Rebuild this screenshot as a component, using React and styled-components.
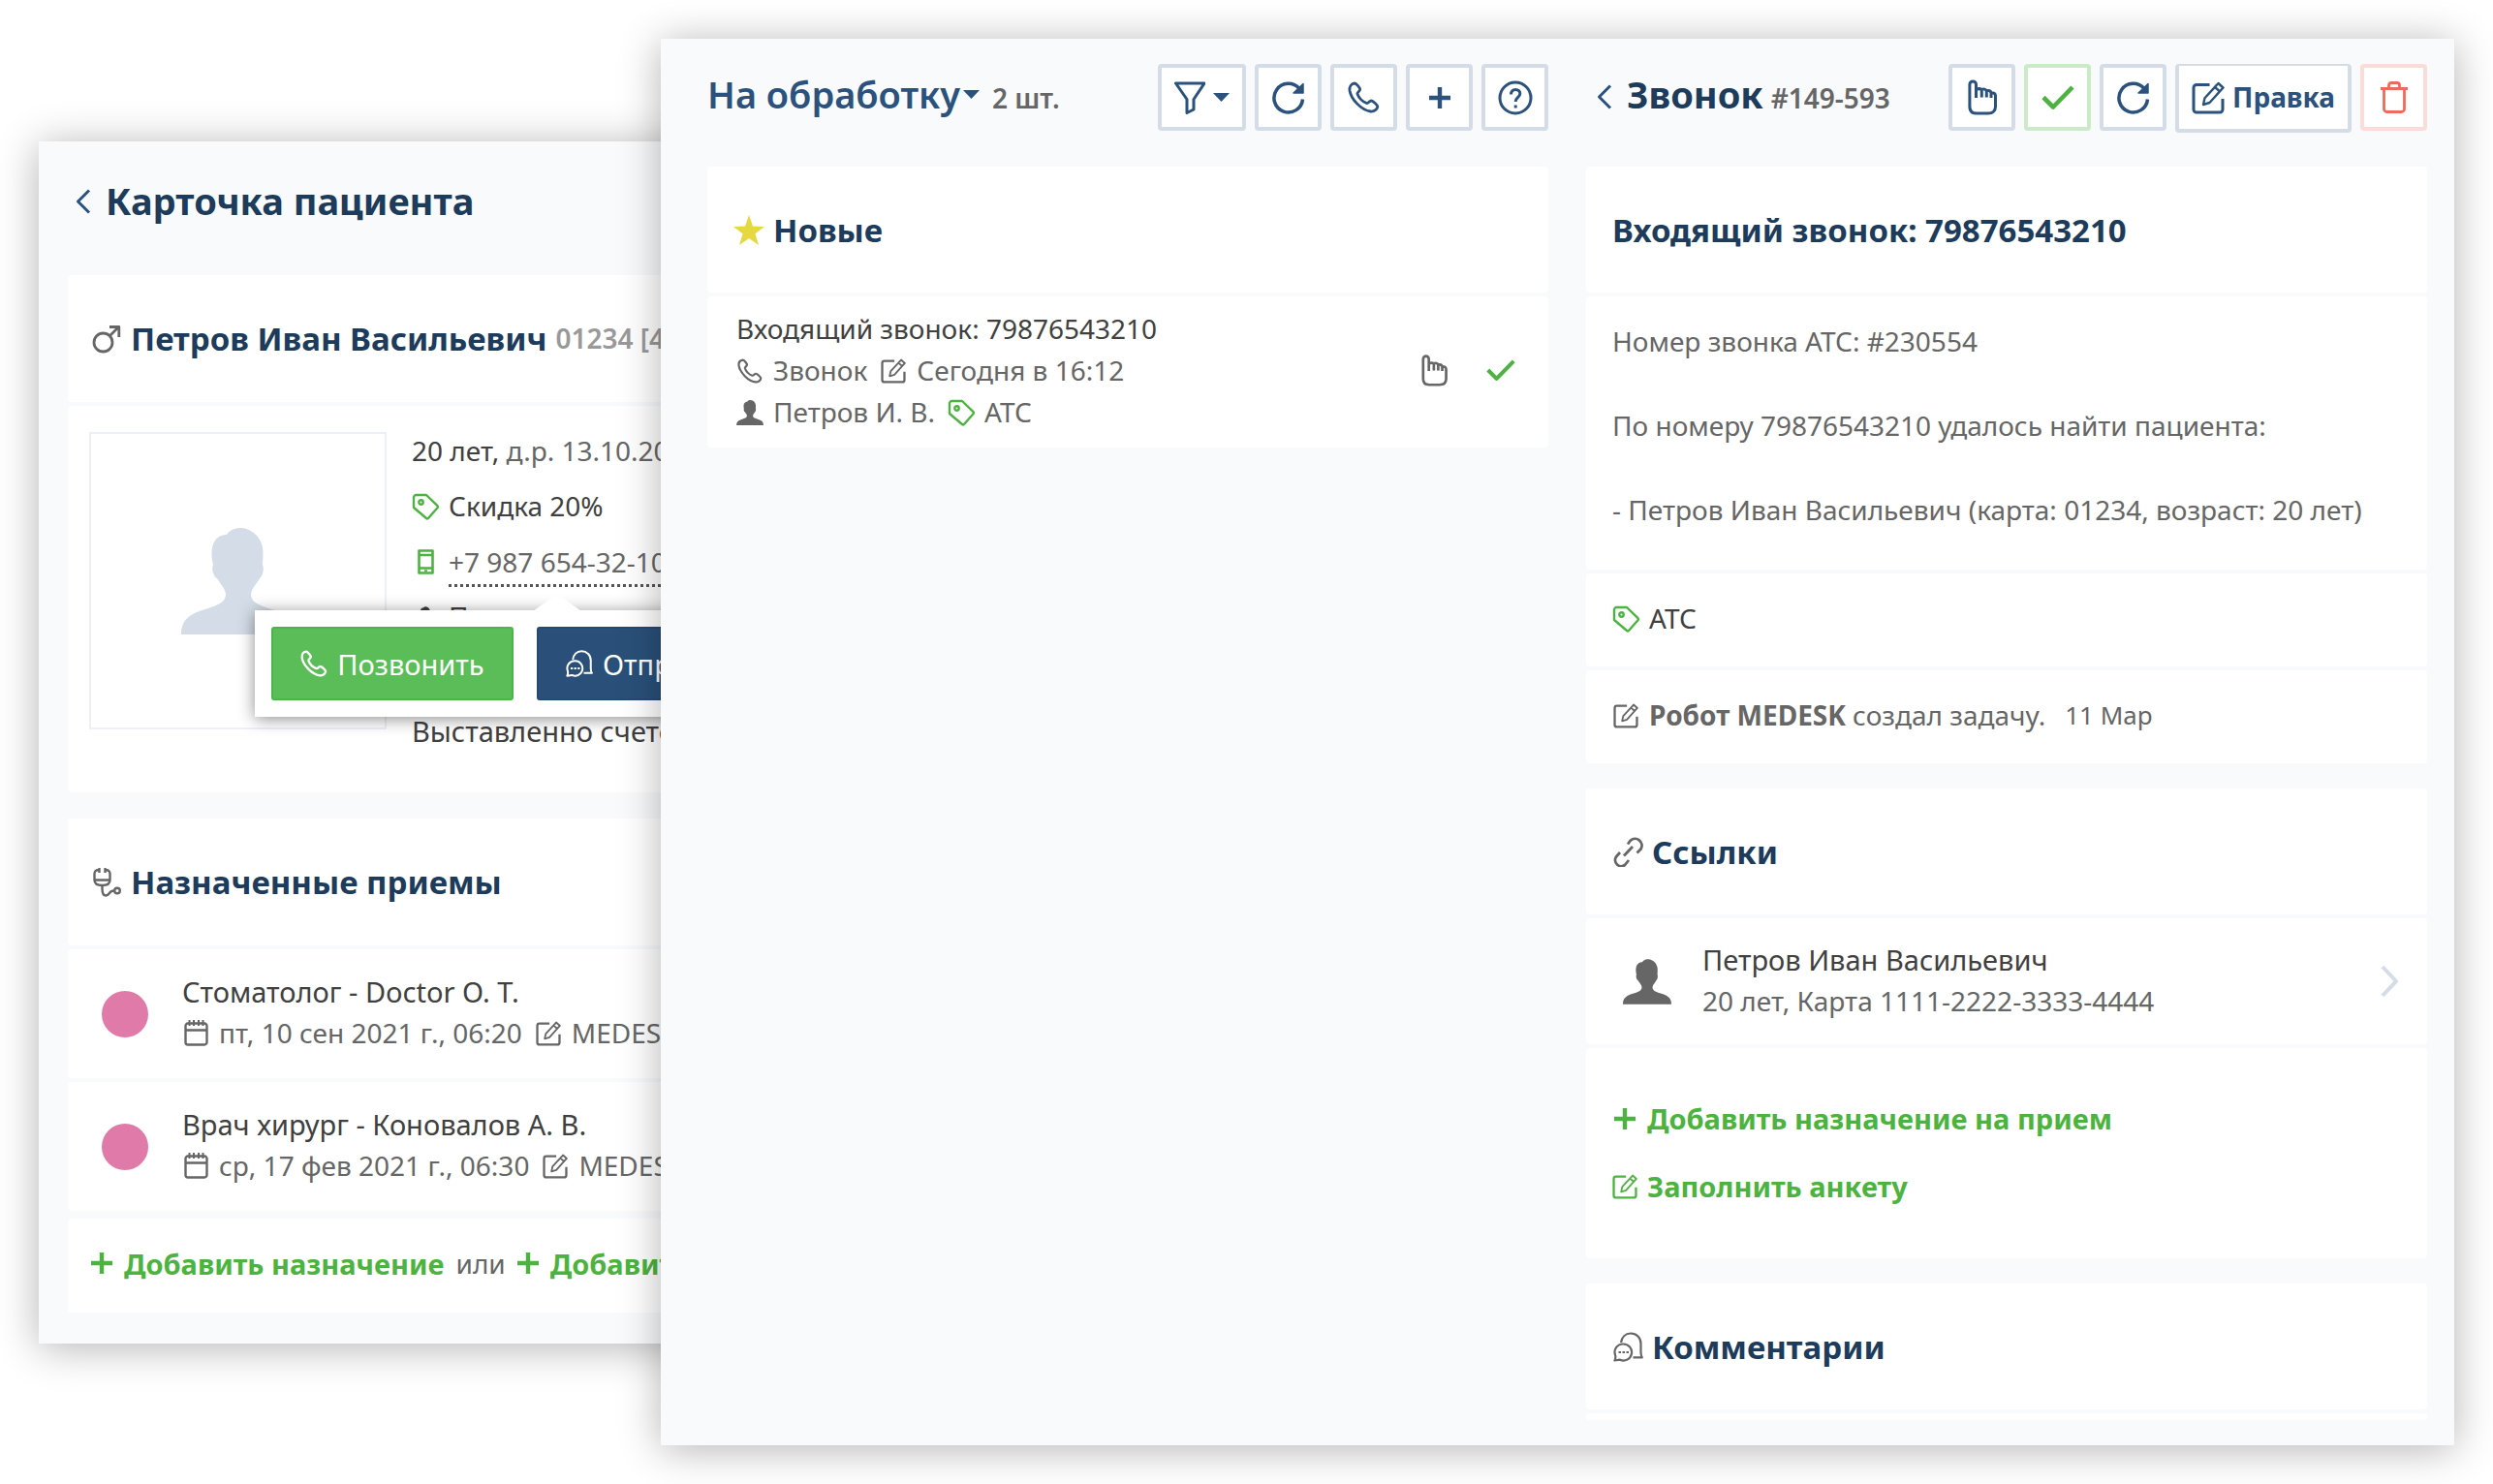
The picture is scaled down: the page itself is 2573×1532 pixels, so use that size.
import React from 'react';
import styled, { createGlobalStyle, css } from 'styled-components';

const c = {
  page: '#ffffff',
  panel: '#f9fafc',
  line: '#d4dde7',
  heading: '#1d3b5b',
  blue: '#2a527d',
  dark: '#404040',
  text: '#666666',
  muted: '#999999',
  green: '#4db340',
  star: '#e6d93f',
  pink: '#e07aa9',
  red: '#ef6a5e',
};

const GlobalStyle = createGlobalStyle`
  *, *::before, *::after { box-sizing: border-box; }
  body {
    margin: 0;
    background: ${c.page};
    color: ${c.text};
    font-family: "Noto Sans", "Open Sans", sans-serif;
    font-size: 28px;
    line-height: 43px;
  }
  h1, h2, p { margin: 0; }
  button { font: inherit; cursor: pointer; }
  a { color: inherit; text-decoration: none; }
`;

/* ---------- icons ---------- */

const shapes = {
  back: { box: [16, 26], w: 3, d: <path d="M14 1.5 2.5 13 14 24.5" /> },
  forward: { box: [20, 34], w: 4, d: <path d="M3 2l14 15L3 32" /> },
  caret: { box: [17, 9], fill: true, d: <path d="M0 0h17L8.500 9z" /> },
  filter: { box: [32, 34], w: 3, d: <path d="M1.500 2h29.500L20 18.500V29l-7 3.500v-14z" /> },
  refresh: {
    box: [34, 34], w: 3.5,
    d: <><path d="M31.500 18.500A14.800 14.800 0 1 1 28 7.500" /><path d="M32 2.500V12H22z" fill="currentColor" strokeWidth="1.500" /></>,
  },
  phone: {
    box: [33, 33], w: 2.8,
    d: <path d="M7 2C3.500 2.500 1.500 5.500 2 9.500 3.400 18.500 14 29.700 23.500 31c4 .5 7-2.300 7.300-4.800.2-1.700-4.900-6.200-6.600-6.200-1.700 0-3 3-4.700 2.500-4-1.500-8.200-5.600-9.500-9.500-.4-1.700 3-3.200 2.700-4.900C12.300 6.500 8.800 1.800 7 2z" />,
  },
  plus: { box: [22, 22], w: 4.4, d: <path d="M11 0v22M0 11h22" /> },
  help: {
    box: [36, 36], w: 3,
    d: <><circle cx="18" cy="18" r="16" /><path d="M13.500 14.500c0-3 2-5 4.700-5s4.600 1.800 4.600 4.300c0 3.700-4.600 3.700-4.600 8.200" /><path d="M18.200 25.500v3" /></>,
  },
  hand: {
    box: [30, 37], w: 3,
    d: <path d="M8.500 19V5.200a3.300 3.300 0 0 0-6.600 0V28c0 4.500 2.500 7 7 7H21c4.500 0 7.500-2.500 7.500-7V17c0-2-1.500-3.500-4.500-3.200-.5-1.800-2.500-2.500-4.700-2-.8-1.600-3-2.300-5-1.300-1.500-1-4-1-5.800 0M14.300 11v7.500M19.300 12.500v6M24 14v5" />,
  },
  check: { box: [34, 26], w: 4.6, d: <path d="M2 12.500l10 10L32 2" /> },
  edit: {
    box: [34, 34], w: 3,
    d: <><path d="M18.500 3.500H5A3 3 0 0 0 2 6.500V29a3 3 0 0 0 3 3h24a3 3 0 0 0 3-3V18" /><path d="M27.500 2l5 4.500L18.500 22l-6.500 2 1.500-6.800zM24 6l5 4.500" strokeWidth="2.400" /></>,
  },
  trash: {
    box: [28, 33], w: 2.8,
    d: <><path d="M0 7.500h28M3.500 8v20.500a3 3 0 0 0 3 3h15a3 3 0 0 0 3-3V8" /><path d="M8.500 7V4a2.500 2.500 0 0 1 2.500-2.500h6A2.500 2.500 0 0 1 19.500 4v3" /></>,
  },
  star: { box: [32, 31], fill: true, d: <path d="M16 0l4 11.600 12 .3-9.600 7.400L26 31l-10-7.100L6 31l3.600-11.700L0 11.900l12-.3z" /> },
  tag: {
    box: [28, 28], w: 2.4,
    d: <><path d="M2 4.500A2.500 2.500 0 0 1 4.500 2H15l11.500 11.200a1.500 1.500 0 0 1 0 2L17 26a1.500 1.500 0 0 1-2 0L2 15z" /><circle cx="9.500" cy="9.500" r="2.200" /></>,
  },
  mobile: {
    box: [17, 26], w: 2.6,
    d: <><path d="M1.500 1.500h14v23h-14zM1.500 6h14M1.500 19.500h14" /><path d="M7 22.300h3" strokeWidth="2" /></>,
  },
  male: {
    box: [30, 30], w: 2.8,
    d: <><circle cx="11.500" cy="18.500" r="9.500" /><path d="M18.500 11.500L27 3M18 2.500h9.800V13" /></>,
  },
  stethoscope: {
    box: [29, 30], w: 2.4,
    d: <><path d="M6 2C3 2 1.500 3.500 1.500 6v6.500c0 3.500 3 5.500 8 5.500s8-2 8-5.500V6C17.500 3.500 16 2 13 2M6.500 0v5M12.500 0v5M1.500 12.500h16" /><path d="M9.500 18v3.500c0 4 .5 7 3.700 7 4.300 0 2.800-5 8.500-5" /><circle cx="25" cy="23.500" r="2.800" /></>,
  },
  calendar: {
    box: [25, 27], w: 2.4,
    d: <><path d="M1.500 6a2.500 2.500 0 0 1 2.500-2.500h17A2.500 2.500 0 0 1 23.500 6v17a2.500 2.500 0 0 1-2.500 2.500H4A2.500 2.500 0 0 1 1.500 23zM1.500 10.500h22" /><path d="M5.500 0v6M10 0v6M15 0v6M19.500 0v6" strokeWidth="2" /></>,
  },
  chat: {
    box: [31, 31], w: 2.2,
    d: <><path d="M8 11C8.800 5.500 12.500 1.500 18 1.500c6 0 10.500 4.300 10.500 10.500v9c0 2.500.3 4 1.300 5.300H20.500" /><path d="M10.500 12.500a8.500 8.500 0 1 1-3.500 16.200L1.500 29.500c.8-1.500 1.200-3 .6-5.500a8.500 8.500 0 0 1 8.400-11.500z" /><path d="M5.500 21h2.500M9.500 21H12M13.500 21H16" /></>,
  },
  link: {
    box: [31, 32], w: 2.8,
    d: <path d="M15 8.500l2.500-3.500a7 7 0 0 1 11 8.500L24.500 17.500M7 17l-4 4.500a6.300 6.300 0 0 0 9 8.500l4-5M11 20.500l9-9.500" />,
  },
  person: {
    box: [118, 110], fill: true,
    d: <path d="M0 110C0 92 12 88 28 83c12-4 18-7 18-15-1-6-6-11-9-16-4-2-6-10-4-14-2-8-2-16 0-21 3-8 9-10 14-10 3-6 11-7 15-7 12 1 20 10 22 20 1 8 0 14 0 18 2 4 0 12-3 14-3 6-8 10-9 16 0 8 6 11 18 15 16 5 28 9 28 27z" />,
  },
};

const Svg = styled.svg`
  display: block;
  flex: none;
  color: ${(p) => p.$color || 'inherit'};
`;

function Icon({ name, width, color }) {
  const { box, w, fill, d } = shapes[name];
  const size = width || box[0];
  return (
    <Svg
      aria-hidden="true"
      $color={color}
      width={size}
      height={Math.round((size * box[1]) / box[0])}
      viewBox={`0 0 ${box[0]} ${box[1]}`}
      fill={fill ? 'currentColor' : 'none'}
      stroke={fill ? 'none' : 'currentColor'}
      strokeWidth={w}
      strokeLinejoin="round"
    >
      {d}
    </Svg>
  );
}

/* ---------- shared parts ---------- */

const Desk = styled.div`
  display: flex;
  align-items: flex-start;
  min-height: 100vh;
  padding: 40px;
`;

const windowLook = css`
  background: ${c.panel};
  box-shadow: 0 4px 40px rgba(0, 0, 0, 0.3);
`;

const PatientWindow = styled.section`
  ${windowLook}
  flex: none;
  width: 900px;
  margin: 106px -258px 0 0;
  padding: 0 30px 32px;
`;

const TaskWindow = styled.main`
  ${windowLook}
  position: relative;
  flex: 1;
  min-width: 0;
  display: grid;
  grid-template-columns: minmax(0, 1fr) minmax(0, 1fr);
  column-gap: 39px;
  padding: 0 28px 26px 48px;
`;

const Column = styled.div`
  display: flex;
  flex-direction: column;
`;

const PatientBar = styled.header`
  display: flex;
  align-items: center;
  gap: 15px;
  height: 138px;
  padding: 0 8px 15px;
`;

const Bar = styled.header`
  display: flex;
  align-items: flex-start;
  justify-content: space-between;
  height: 132px;
  padding-left: ${(p) => (p.$inset ? 11 : 0)}px;
`;

const BarTitle = styled.div`
  display: flex;
  align-items: center;
  gap: 15px;
  padding-top: 36px;
`;

const TitleText = styled.div`
  display: flex;
  align-items: baseline;
  gap: 8px;
`;

const Title = styled.h1`
  color: ${c.heading};
  font-size: 38px;
  font-weight: 700;
  white-space: nowrap;
`;

const Note = styled.span`
  font-weight: 600;
  white-space: nowrap;
`;

const IconLink = styled.a`
  display: flex;
  color: ${c.blue};
`;

const TitleMenu = styled.button`
  display: flex;
  align-items: center;
  gap: 3px;
  margin-right: 5px;
  padding: 0;
  border: 0;
  background: none;
  color: ${c.blue};
  font-size: 38px;
  font-weight: 600;
  white-space: nowrap;
`;

const Toolbar = styled.div`
  display: flex;
  align-items: flex-start;
  gap: 9px;
  padding-top: 26px;
`;

const tones = {
  blue: [c.blue, c.line],
  green: [c.green, '#cbeac8'],
  red: [c.red, '#fbdcd9'],
};

const ToolButton = styled.button`
  display: flex;
  align-items: center;
  justify-content: center;
  gap: 8px;
  width: ${(p) => p.$width || 69}px;
  height: ${(p) => (p.$labelled ? 71 : 69)}px;
  padding: 0;
  border: 4px solid ${(p) => tones[p.$tone || 'blue'][1]};
  border-top-width: ${(p) => (p.$labelled ? 2 : 4)}px;
  border-radius: 4px;
  background: #fff;
  color: ${(p) => tones[p.$tone || 'blue'][0]};
  font-weight: 700;
`;

const Card = styled.section`
  display: flex;
  flex-direction: column;
  gap: 4px;
  margin-bottom: ${(p) => p.$gap || 0}px;
`;

const block = css`
  border-radius: 4px;
  background: #fff;
`;

const CardHead = styled.header`
  ${block}
  display: flex;
  align-items: center;
  gap: 9px;
  height: ${(p) => p.$height || 130}px;
  padding: 0 ${(p) => p.$pad || 27}px;
`;

const CardTitle = styled.h2`
  color: ${c.heading};
  font-size: 33px;
  font-weight: 700;
  white-space: nowrap;
`;

const IconSlot = styled.span`
  display: flex;
  flex: none;
  align-items: center;
  justify-content: center;
  width: ${(p) => p.$width || 28}px;
`;

const CardNumber = styled.span`
  color: ${c.muted};
  font-weight: 600;
  white-space: nowrap;
`;

const Line = styled.div`
  display: flex;
  align-items: center;
  gap: 13px;
  color: ${(p) => (p.$dark ? c.dark : c.text)};
  font-size: ${(p) => (p.$lead ? 29 : 28)}px;
  white-space: nowrap;
`;

const Tagged = styled.span`
  display: flex;
  align-items: center;
  gap: 10px;
`;

const ActionLink = styled.a`
  display: inline-flex;
  align-items: center;
  gap: ${(p) => p.$gap || 10}px;
  color: ${c.green};
  font-size: 29px;
  font-weight: 700;
  white-space: nowrap;
`;

/* ---------- patient window ---------- */

const Profile = styled.div`
  ${block}
  display: flex;
  gap: 26px;
  height: 399px;
  padding: 27px 22px;
`;

const Photo = styled.div`
  display: flex;
  flex: none;
  align-items: center;
  justify-content: center;
  width: 307px;
  height: 307px;
  border: 2px solid #edf1f5;
  color: ${c.line};
`;

const Facts = styled.div`
  position: relative;
  display: flex;
  flex-direction: column;
  gap: 14px;
  margin-top: -2px;
`;

const Strong = styled.span`
  color: ${c.dark};
`;

const PhoneLink = styled.a`
  margin-bottom: -5px;
  border-bottom: 3px dotted #555;
  line-height: 45px;
`;

const InvoiceLine = styled(Line)`
  padding-top: 4px;
`;

const Popover = styled.div`
  position: absolute;
  top: 186px;
  left: -162px;
  display: flex;
  gap: 24px;
  padding: 17px;
  background: #fff;
  box-shadow: 0 2px 16px rgba(0, 0, 0, 0.45);

  &::before {
    content: '';
    position: absolute;
    top: -17px;
    left: 287px;
    border: 25px solid transparent;
    border-top-width: 0;
    border-bottom: 18px solid #fff;
  }
`;

const PopButton = styled.button`
  display: flex;
  align-items: center;
  justify-content: center;
  gap: 10px;
  min-width: 250px;
  height: 76px;
  padding: 0 28px;
  border: 2px solid ${(p) => (p.$green ? '#4fb34b' : '#234a74')};
  border-radius: 3px;
  background: ${(p) => (p.$green ? '#5bbd58' : '#2a5079')};
  color: #fff;
  font-size: 29px;
  white-space: nowrap;
`;

const Visit = styled.article`
  ${block}
  display: flex;
  align-items: center;
  gap: 35px;
  height: 133px;
  padding: 0 35px;
`;

const VisitText = styled.div`
  padding-bottom: 3px;
`;

const Dot = styled.span`
  flex: none;
  width: 48px;
  height: 48px;
  border-radius: 50%;
  background: ${c.pink};
`;

const VisitActions = styled.footer`
  ${block}
  display: flex;
  align-items: center;
  gap: 12px;
  height: 97px;
  margin-top: 4px;
  padding: 0 24px 5px;
`;

/* ---------- task window ---------- */

const Task = styled.article`
  ${block}
  display: flex;
  align-items: center;
  justify-content: space-between;
  padding: 12px 34px 15px 30px;
`;

const TaskActions = styled.div`
  display: flex;
  align-items: center;
  gap: 40px;
`;

const BareButton = styled.button`
  display: flex;
  padding: 0;
  border: 0;
  background: none;
  color: ${(p) => (p.$green ? c.green : c.text)};
`;

const Message = styled.div`
  ${block}
  display: flex;
  flex-direction: column;
  gap: 44px;
  padding: 25px 27px 40px;
`;

const Strip = styled.div`
  ${block}
  display: flex;
  align-items: center;
  gap: 10px;
  height: 96px;
  padding: 0 27px 3px;
  color: ${(p) => (p.$dark ? c.dark : c.text)};
  white-space: nowrap;
`;

const Stamp = styled.time`
  padding-left: 10px;
  font-size: 26px;
`;

const PersonRow = styled.a`
  ${block}
  display: flex;
  align-items: center;
  gap: 32px;
  height: 130px;
  padding: 0 29px 0 38px;
`;

const PersonText = styled.div`
  flex: 1;
  padding-bottom: 3px;
`;

const Actions = styled.div`
  ${block}
  display: flex;
  flex-direction: column;
  align-items: flex-start;
  gap: 27px;
  padding: 51px 27px 53px;
`;

const Stub = styled.div`
  ${block}
  height: 7px;
`;

const visits = [
  { title: 'Стоматолог - Doctor О. Т.', date: 'пт, 10 сен 2021 г., 06:20' },
  { title: 'Врач хирург - Коновалов А. В.', date: 'ср, 17 фев 2021 г., 06:30' },
];

function Patient() {
  return (
    <PatientWindow>
      <PatientBar>
        <IconLink href="#back" aria-label="Назад"><Icon name="back" /></IconLink>
        <Title>Карточка пациента</Title>
      </PatientBar>

      <Card $gap={27}>
        <CardHead $height={131} $pad={24}>
          <IconSlot $width={32}><Icon name="male" /></IconSlot>
          <CardTitle>Петров Иван Васильевич</CardTitle>
          <CardNumber>01234 [4]</CardNumber>
        </CardHead>
        <Profile>
          <Photo><Icon name="person" /></Photo>
          <Facts>
            <Line><span><Strong>20 лет,</Strong> д.р. 13.10.2000</span></Line>
            <Line $dark><Tagged><IconSlot><Icon name="tag" color={c.green} /></IconSlot>Скидка 20%</Tagged></Line>
            <Line>
              <Tagged>
                <IconSlot><Icon name="mobile" color={c.green} /></IconSlot>
                <PhoneLink href="tel:+79876543210">+7 987 654-32-10</PhoneLink>
              </Tagged>
            </Line>
            <Line $dark><Tagged><IconSlot><Icon name="person" width={22} /></IconSlot>Петров</Tagged></Line>
            <Line $dark>&nbsp;</Line>
            <InvoiceLine $dark $lead>Выставленно счетов</InvoiceLine>
            <Popover>
              <PopButton $green><Icon name="phone" width={28} />Позвонить</PopButton>
              <PopButton><Icon name="chat" width={28} />Отправить SMS</PopButton>
            </Popover>
          </Facts>
        </Profile>
      </Card>

      <Card>
        <CardHead $height={131} $pad={24}>
          <IconSlot $width={32}><Icon name="stethoscope" /></IconSlot>
          <CardTitle>Назначенные приемы</CardTitle>
        </CardHead>
        {visits.map((v) => (
          <Visit key={v.title}>
            <Dot />
            <VisitText>
              <Line $dark $lead>{v.title}</Line>
              <Line>
                <Tagged><IconSlot><Icon name="calendar" /></IconSlot>{v.date}</Tagged>
                <Tagged><IconSlot><Icon name="edit" width={26} /></IconSlot>MEDESK</Tagged>
              </Line>
            </VisitText>
          </Visit>
        ))}
        <VisitActions>
          <ActionLink href="#add-visit" $gap={12}><Icon name="plus" />Добавить назначение</ActionLink>
          <span>или</span>
          <ActionLink href="#add" $gap={12}><Icon name="plus" />Добавить</ActionLink>
        </VisitActions>
      </Card>
    </PatientWindow>
  );
}

function Queue() {
  return (
    <Column>
      <Bar>
        <BarTitle>
          <TitleText>
            <TitleMenu>На обработку<Icon name="caret" /></TitleMenu>
            <Note>2 шт.</Note>
          </TitleText>
        </BarTitle>
        <Toolbar>
          <ToolButton $width={91} aria-label="Фильтр"><Icon name="filter" /><Icon name="caret" /></ToolButton>
          <ToolButton aria-label="Обновить"><Icon name="refresh" /></ToolButton>
          <ToolButton aria-label="Позвонить"><Icon name="phone" /></ToolButton>
          <ToolButton aria-label="Добавить"><Icon name="plus" /></ToolButton>
          <ToolButton aria-label="Помощь"><Icon name="help" /></ToolButton>
        </Toolbar>
      </Bar>
      <Card>
        <CardHead>
          <IconSlot $width={32}><Icon name="star" color={c.star} /></IconSlot>
          <CardTitle>Новые</CardTitle>
        </CardHead>
        <Task>
          <div>
            <Line $dark>Входящий звонок: 79876543210</Line>
            <Line>
              <Tagged><IconSlot><Icon name="phone" width={26} /></IconSlot>Звонок</Tagged>
              <Tagged><IconSlot><Icon name="edit" width={26} /></IconSlot>Сегодня в 16:12</Tagged>
            </Line>
            <Line>
              <Tagged><IconSlot><Icon name="person" width={28} /></IconSlot>Петров И. В.</Tagged>
              <Tagged><IconSlot><Icon name="tag" color={c.green} /></IconSlot>АТС</Tagged>
            </Line>
          </div>
          <TaskActions>
            <BareButton aria-label="Взять в работу"><Icon name="hand" width={27} /></BareButton>
            <BareButton $green aria-label="Завершить"><Icon name="check" width={30} /></BareButton>
          </TaskActions>
        </Task>
      </Card>
    </Column>
  );
}

function Call() {
  return (
    <Column>
      <Bar $inset>
        <BarTitle>
          <IconLink href="#queue" aria-label="Назад"><Icon name="back" /></IconLink>
          <TitleText>
            <Title>Звонок</Title>
            <Note>#149-593</Note>
          </TitleText>
        </BarTitle>
        <Toolbar>
          <ToolButton aria-label="Взять в работу"><Icon name="hand" /></ToolButton>
          <ToolButton $tone="green" aria-label="Завершить"><Icon name="check" /></ToolButton>
          <ToolButton aria-label="Обновить"><Icon name="refresh" /></ToolButton>
          <ToolButton $width={182} $labelled><Icon name="edit" />Правка</ToolButton>
          <ToolButton $tone="red" aria-label="Удалить"><Icon name="trash" /></ToolButton>
        </Toolbar>
      </Bar>

      <Card $gap={26}>
        <CardHead><CardTitle>Входящий звонок: 79876543210</CardTitle></CardHead>
        <Message>
          <p>Номер звонка АТС: #230554</p>
          <p>По номеру 79876543210 удалось найти пациента:</p>
          <p>- Петров Иван Васильевич (карта: 01234, возраст: 20 лет)</p>
        </Message>
        <Strip $dark><IconSlot><Icon name="tag" color={c.green} /></IconSlot>АТС</Strip>
        <Strip>
          <IconSlot><Icon name="edit" width={26} /></IconSlot>
          <span><b>Робот MEDESK</b> создал задачу.</span>
          <Stamp>11 Мар</Stamp>
        </Strip>
      </Card>

      <Card $gap={26}>
        <CardHead>
          <IconSlot $width={32}><Icon name="link" /></IconSlot>
          <CardTitle>Ссылки</CardTitle>
        </CardHead>
        <PersonRow href="#patient">
          <Icon name="person" width={50} />
          <PersonText>
            <Line $dark $lead>Петров Иван Васильевич</Line>
            <Line>20 лет, Карта 1111-2222-3333-4444</Line>
          </PersonText>
          <Icon name="forward" color={c.line} />
        </PersonRow>
        <Actions>
          <ActionLink href="#add-visit"><IconSlot $width={26}><Icon name="plus" /></IconSlot>Добавить назначение на прием</ActionLink>
          <ActionLink href="#form"><IconSlot $width={26}><Icon name="edit" width={26} /></IconSlot>Заполнить анкету</ActionLink>
        </Actions>
      </Card>

      <Card>
        <CardHead>
          <IconSlot $width={32}><Icon name="chat" /></IconSlot>
          <CardTitle>Комментарии</CardTitle>
        </CardHead>
        <Stub />
      </Card>
    </Column>
  );
}

export default function App() {
  return (
    <>
      <GlobalStyle />
      <Desk>
        <Patient />
        <TaskWindow>
          <Queue />
          <Call />
        </TaskWindow>
      </Desk>
    </>
  );
}
